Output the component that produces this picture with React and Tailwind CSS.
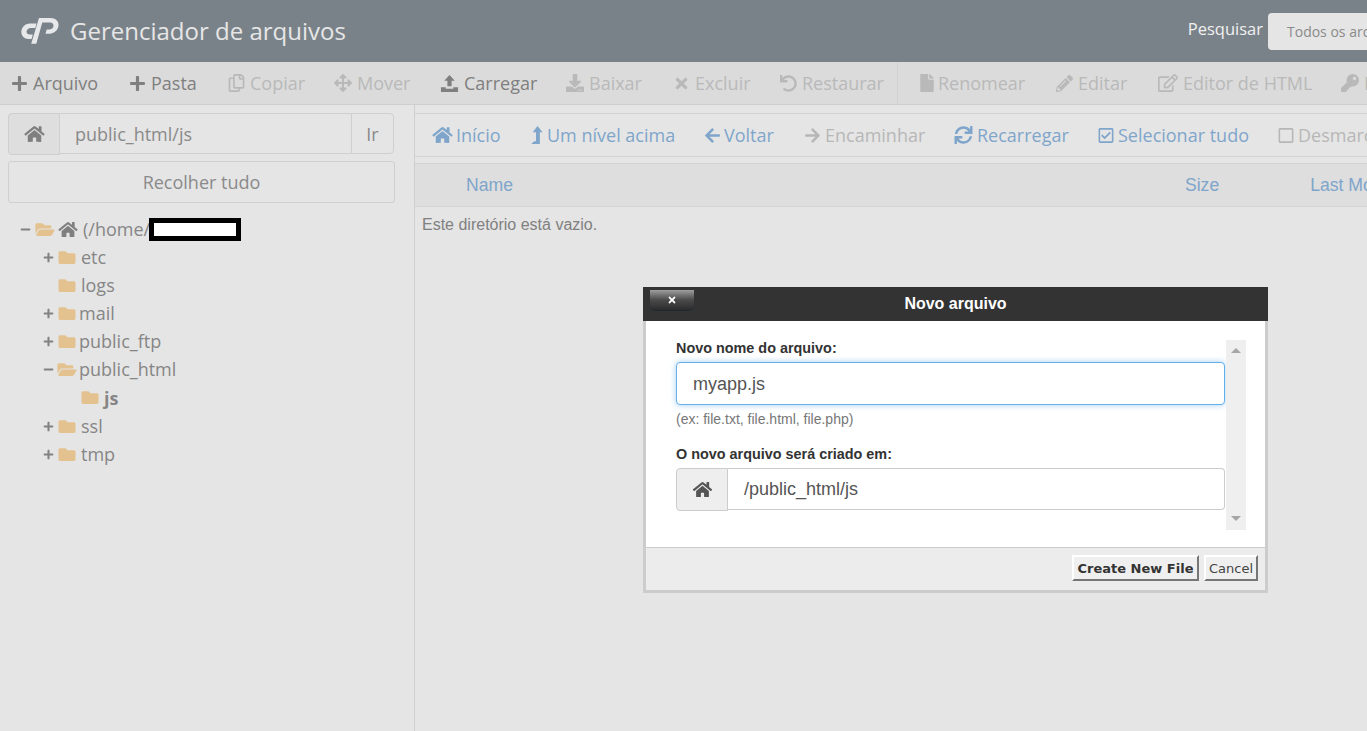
import React from "react";
import {
  FaHome, FaPlus, FaRegCopy, FaArrowsAlt, FaDownload, FaTimes, FaUndo, FaFile, FaPencilAlt,
  FaRegEdit, FaKey, FaFolder, FaFolderOpen, FaArrowLeft, FaArrowRight, FaSync, FaRegCheckSquare, FaRegSquare, FaMinus,
} from "react-icons/fa";

const Upload = ({ className }) => (
  <svg viewBox="0 0 20 20" className={className} fill="currentColor">
    <path d="M10 1 15.5 7H12.2V13H7.8V7H4.5Z" />
    <path d="M1 14H6V15.5H14V14H19V19H1Z" />
  </svg>
);
const LevelUp = ({ className }) => (
  <svg viewBox="0 0 12 20" className={className} fill="currentColor">
    <path d="M6.5 0 12 6.5H9V19H0L3 16H5V6.5H1.5Z" />
  </svg>
);
const Logo = () => (
  <svg viewBox="0 0 38 26" className="w-[38px] h-[26px]" fill="#e6e8ea">
    <path d="M15.5 5.5H9C4.5 5.5 1 8.8 .4 13c-.6 4.6 2.7 8 7 8h3.2l1.2-4.4H8.6c-2 0-3.3-1.5-3-3.3.3-2 2-3.4 4-3.4h4.7Z" />
    <path d="M18 0H29.5C34.6 0 38 3.3 37.5 7.6 37 12.300 33.200 15.800 28.500 15.800H24.500L25.700 11.500H28.200C30.500 11.500 32.300 10 32.500 8 32.700 6.100 31.300 4.600 29.200 4.600H21.300L15.300 25.800H10.200Z" />
  </svg>
);

const tool = [
  [<FaPlus className="w-[17px] h-[17px]" />, "Arquivo", 1, "w-[118px]"],
  [<FaPlus className="w-[17px] h-[17px]" />, "Pasta", 1, "w-[99px]"],
  [<FaRegCopy className="w-[17px] h-[18px]" />, "Copiar", 0, "w-[106px]"],
  [<FaArrowsAlt className="w-[18px] h-[18px]" />, "Mover", 0, "w-[106px]"],
  [<Upload className="w-[19px] h-[19px]" />, "Carregar", 1, "w-[126px]"],
  [<FaDownload className="w-[18px] h-[18px]" />, "Baixar", 0, "w-[107px]"],
  [<FaTimes className="w-[17px] h-[17px]" />, "Excluir", 0, "w-[107px]"],
  [<FaUndo className="w-[17px] h-[17px]" />, "Restaurar", 0, "w-[118px]"],
];
const tool2 = [
  [<FaFile className="w-[14px] h-[18px]" />, "Renomear", "w-[136px]", "gap-[4px]"],
  [<FaPencilAlt className="w-[17px] h-[17px]" />, "Editar", "w-[102px]", "gap-[5px]"],
  [<FaRegEdit className="w-[20px] h-[18px]" />, "Editor de HTML", "w-[183px]", "gap-[5px]"],
  [<FaKey className="w-[18px] h-[18px]" />, "Redefinir", "w-[120px]", "gap-[5px]"],
];
const nav = [
  [<FaHome className="w-[21px] h-[18px]" />, "Início", 1, "w-[99px]", "gap-[3px]"],
  [<LevelUp className="w-[12px] h-[19px]" />, "Um nível acima", 1, "w-[173px]", "gap-[4px]"],
  [<FaArrowLeft className="w-[17px] h-[17px]" />, "Voltar", 1, "w-[100px]", "gap-[3px]"],
  [<FaArrowRight className="w-[17px] h-[17px]" />, "Encaminhar", 0, "w-[150px]", "gap-[4px]"],
  [<FaSync className="w-[19px] h-[18px]" />, "Recarregar", 1, "w-[144px]", "gap-[4px]"],
  [<FaRegCheckSquare className="w-[16px] h-[17px]" />, "Selecionar tudo", 1, "w-[180px]", "gap-[4px]"],
  [<FaRegSquare className="w-[16px] h-[17px]" />, "Desmarcar tudo", 0, "w-[180px]", "gap-[4px]"],
];
const tree = [
  ["etc", "plus", "ml-[5px]"],
  ["logs", "", "ml-[5px]"],
  ["mail", "plus", "ml-[3px]"],
  ["public_ftp", "plus", "ml-[3px]"],
  ["public_html", "minus", "ml-[3px]"],
];
const Row = ({ name, mark, gap, open }) => (
  <div className="h-[28px] flex items-center pl-[43px]">
    <span className="w-[15px] text-[#828282] flex">
      {mark === "plus" && <FaPlus className="w-[11px] h-[11px]" />}
      {mark === "minus" && <FaMinus className="w-[11px] h-[11px]" />}
    </span>
    {open ? <FaFolderOpen className="w-[20px] h-[17px] text-[#e3c28f] -ml-[1px] -mr-[1px]" /> : <FaFolder className="w-[18px] h-[17px] text-[#e3c28f]" />}
    <span className={gap}>{name}</span>
  </div>
);

export default function App() {
  return (
    <div className="relative w-[1367px] h-[731px] overflow-hidden bg-[#e5e5e5] text-[18px] leading-[24px] text-[#868686] font-['Open_Sans',sans-serif]">
      <header className="h-[62px] bg-[#7a8289] flex items-center pl-[21px] whitespace-nowrap">
        <Logo />
        <h1 className="ml-[11px] text-[24px] leading-[32px] text-[#e6e6e6] font-normal">Gerenciador de arquivos</h1>
        <span className="ml-auto text-[16.5px] text-[#f0f0f0] -mt-[5px]">Pesquisar</span>
        <div className="ml-[5px] w-[99px] h-[37px] -mr-[0px] mt-[1px] bg-[#e5e5e5] rounded-l-[4px] pl-[19px] flex items-center overflow-hidden text-[14px] text-[#8a8a8a]">
          Todos os arquivos
        </div>
      </header>

      <div className="h-[43px] bg-[#dbdbdb] border-b border-[#cecece] flex items-center pl-[11px] whitespace-nowrap overflow-hidden">
        {tool.map(([icon, label, on, w]) => (
          <div key={label} className={`${w} shrink-0 flex items-center gap-[5px] ${on ? "text-[#7f7f7f]" : "text-[#b9b9b9]"}`}>
            {icon}
            <span>{label}</span>
          </div>
        ))}
        <div className="w-px h-[43px] bg-[#d2d2d2] shrink-0 -ml-[1px] mr-[22px]" />
        {tool2.map(([icon, label, w, g]) => (
          <div key={label} className={`${w} shrink-0 flex items-center ${g} text-[#b9b9b9]`}>
            {icon}
            <span>{label}</span>
          </div>
        ))}
      </div>

      <div className="flex h-[626px]">
        <aside className="w-[415px] shrink-0 border-r border-[#cfcfcf] pt-[8px] pl-[8px]">
          <div className="w-[386px] h-[41px] flex">
            <div className="w-[52px] h-[42px] bg-[#dedede] border border-[#cfcfcf] rounded-l-[4px] flex items-center justify-center text-[#7f7f7f]">
              <FaHome className="w-[21px] h-[18px]" />
            </div>
            <div className="flex-1 border-y border-[#cfcfcf] pl-[15px] flex items-center text-[#8a8a8a]">public_html/js</div>
            <div className="w-[43px] border border-[#cfcfcf] rounded-r-[4px] flex items-center justify-center text-[#8a8a8a]">Ir</div>
          </div>
          <div className="mt-[7px] w-[387px] h-[42px] border border-[#cfcfcf] rounded-[3px] flex items-center justify-center text-[#8a8a8a]">Recolher tudo</div>
          <div className="mt-[12px] -ml-[8px]">
            <div className="h-[28px] flex items-center pl-[20px]">
              <FaMinus className="w-[11px] h-[11px] text-[#828282]" />
              <FaFolderOpen className="ml-[4px] w-[20px] h-[17px] text-[#e3c28f]" />
              <FaHome className="ml-[3px] w-[20px] h-[17px] text-[#7f7f7f]" />
              <span className="ml-[5px]">(/home/</span>
              <span className="w-[92px] h-[23px] border-[5px] border-black bg-white -ml-[1px]" />
            </div>
            {tree.map(([name, mark, gap]) => (
              <Row key={name} name={name} mark={mark} gap={gap} open={name === "public_html"} />
            ))}
            <div className="h-[29px] flex items-center pl-[81px]">
              <FaFolder className="w-[18px] h-[17px] text-[#e3c28f]" />
              <span className="ml-[5px] font-bold">js</span>
            </div>
            <Row name="ssl" mark="plus" gap="ml-[5px]" />
            <Row name="tmp" mark="plus" gap="ml-[5px]" />
          </div>
        </aside>

        <main className="flex-1 min-w-0 pt-[8px] whitespace-nowrap overflow-hidden">
          <div className="h-[44px] border-y border-[#d2d2d2] flex items-center pl-[17px]">
            {nav.map(([icon, label, on, w, g]) => (
              <div key={label} className={`${w} shrink-0 flex items-center ${g} ${on ? "text-[#7fa5cb]" : "text-[#b7b7b7]"}`}>
                {icon}
                <span>{label}</span>
              </div>
            ))}
          </div>
          <div className="mt-[6px] h-[44px] bg-[#dedede] border-y border-[#d2d2d2] flex items-center text-[#7fa5cb] font-['Liberation_Sans',sans-serif] text-[17.6px]">
            <span className="ml-[51px]">Name</span>
            <span className="ml-[672px]">Size</span>
            <span className="ml-[91px]">Last Modified</span>
          </div>
          <p className="mt-[6px] ml-[7px] font-['Liberation_Sans',sans-serif] text-[16px] text-[#808080]">Este diretório está vazio.</p>
        </main>
      </div>

      <div className="absolute left-[643px] top-[287px] w-[625px] h-[306px] flex flex-col bg-white font-['Liberation_Sans',sans-serif] border-x-[3px] border-b-[3px] border-[#cccccc] text-[#333]">
        <div className="relative -mx-[3px] h-[34px] shrink-0 bg-[#333333] flex items-center justify-center text-white font-bold text-[16px]">
          Novo arquivo
          <div className="absolute left-[7px] top-[3px] w-[44px] h-[20px] rounded-b-[5px] bg-gradient-to-b from-[#a0a0a0] via-[#4a4a4a] to-[#2c2c2c] flex items-center justify-center shadow-[0_1px_0_#1c2a30]">
            <FaTimes className="w-[10px] h-[10px] text-white" />
          </div>
        </div>
        <div className="flex-1 relative pl-[30px] pt-[19px]">
          <div className="w-[549px]">
            <label className="block text-[14.400px] leading-[16px] font-bold">Novo nome do arquivo:</label>
            <div className="mt-[6px] h-[43px] bg-white border border-[#66afe9] rounded-[4px] shadow-[0_0_6px_rgba(102,175,233,0.6)] pl-[16px] flex items-center text-[18px] text-[#555]">myapp.js</div>
            <p className="mt-[6px] text-[14px] leading-[16px] text-[#777]">(ex: file.txt, file.html, file.php)</p>
            <label className="block mt-[19px] text-[14.400px] leading-[16px] font-bold">O novo arquivo será criado em:</label>
            <div className="mt-[6px] h-[42px] flex text-[18px] text-[#555]">
              <div className="w-[52px] h-[43px] bg-[#eeeeee] border border-[#cccccc] rounded-l-[4px] flex items-center justify-center">
                <FaHome className="w-[21px] h-[17px]" />
              </div>
              <div className="flex-1 border-y border-r border-[#cccccc] rounded-r-[4px] pl-[16px] flex items-center">/public_html/js</div>
            </div>
          </div>
          <div className="absolute left-[580px] top-[19px] w-[20px] h-[190px] bg-[#efefef]">
            <div className="mx-auto mt-[8px] w-0 h-0 border-x-[5px] border-x-transparent border-b-[5px] border-b-[#a6a6a6]" />
            <div className="absolute left-[5px] bottom-[9px] w-0 h-0 border-x-[5px] border-x-transparent border-t-[5px] border-t-[#a6a6a6]" />
          </div>
        </div>
        <div className="h-[43px] shrink-0 bg-[#ececec] border-t border-[#cccccc] flex justify-end items-start pt-[7px] pr-[7px] gap-[5px] font-['DejaVu_Sans',sans-serif] text-[13px]">
          <button className="h-[26px] w-[127px] bg-[#efefef] border-[2px] border-[#ffffff] border-r-[#767676] border-b-[#767676] font-bold text-[#333]">Create New File</button>
          <button className="h-[26px] w-[54px] bg-[#efefef] border-[2px] border-[#ffffff] border-r-[#767676] border-b-[#767676] text-[#444]">Cancel</button>
        </div>
      </div>
    </div>
  );
}
